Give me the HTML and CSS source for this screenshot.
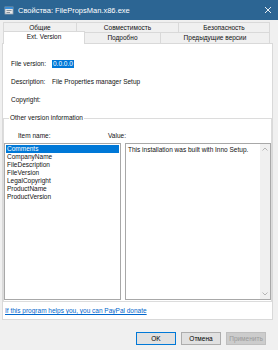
FILE: index.html
```html
<!DOCTYPE html>
<html lang="ru">
<head>
<meta charset="utf-8">
<title>Свойства: FilePropsMan.x86.exe</title>
<link rel="stylesheet" href="styles.css">
</head>
<body>

<div class="window">
    <div class="titlebar">
        <svg class="app_icon" width="10" height="10" viewBox="0 0 10 10">
            <rect x="1" y="2" width="8" height="7" fill="#e8e8e8" stroke="#9aa7b3" stroke-width="0.8"/>
            <rect x="1" y="2" width="8" height="2" fill="#3c8fd8"/>
            <rect x="2.5" y="5.2" width="5" height="0.8" fill="#6d7b88"/>
            <rect x="2.5" y="7" width="3.5" height="0.8" fill="#6d7b88"/>
        </svg>
        <span class="title">Свойства: FilePropsMan.x86.exe</span>
        <svg class="close" width="8" height="8" viewBox="0 0 8 8">
            <path d="M1 1 L7 7 M7 1 L1 7" stroke="#fff" stroke-width="0.9"/>
        </svg>
    </div>

    <div class="tabs">
        <div class="tab_row">
            <div class="tab" style="width: 74px;">Общие</div>
            <div class="tab" style="width: 103px;">Совместимость</div>
            <div class="tab" style="width: 92px;">Безопасность</div>
        </div>
        <div class="tab_row">
            <div class="tab active" style="width: 82px;">Ext. Version</div>
            <div class="tab" style="width: 77px;">Подробно</div>
            <div class="tab" style="width: 110px;">Предыдущие версии</div>
        </div>
    </div>

    <div class="page">
        <div class="fields">
            <span class="label">File version:</span>
            <span class="val"><span class="selected_text">0.0.0.0</span></span>
            <span class="label">Description:</span>
            <span class="val">File Properties manager Setup</span>
            <span class="label">Copyright:</span>
            <span class="val"></span>
        </div>

        <fieldset class="group">
            <legend>Other version information</legend>
            <div class="col_heads">
                <span class="head_item">Item name:</span>
                <span class="head_value">Value:</span>
            </div>
            <div class="cols">
                <ul class="items">
                    <li class="current">Comments</li>
                    <li>CompanyName</li>
                    <li>FileDescription</li>
                    <li>FileVersion</li>
                    <li>LegalCopyright</li>
                    <li>ProductName</li>
                    <li>ProductVersion</li>
                </ul>
                <div class="value_box">
                    <div class="value_text">This installation was built with Inno Setup.</div>
                    <div class="scrollbar">
                        <svg width="6" height="4" viewBox="0 0 6 4"><path d="M0.5 3.5 L3 1 L5.5 3.5" fill="none" stroke="#a6a6a6" stroke-width="0.8"/></svg>
                        <svg width="6" height="4" viewBox="0 0 6 4"><path d="M0.5 0.5 L3 3 L5.5 0.5" fill="none" stroke="#a6a6a6" stroke-width="0.8"/></svg>
                    </div>
                </div>
            </div>
        </fieldset>

        <a class="donate" href="#">If this program helps you, you can PayPal donate</a>
    </div>

    <div class="buttons">
        <button class="btn default">OK</button>
        <button class="btn">Отмена</button>
        <button class="btn" disabled>Применить</button>
    </div>
</div>

</body>
</html>
```

FILE: styles.css
```css
*,*:after,*:before{
	box-sizing: border-box;
}
body{
	margin: 0;
	font-family: "Liberation Sans", Arial, sans-serif;
	font-size: 6.5px;
	color: #111;
	background: #f0f0f0;
}

.window{
	width: 278px;
	height: 350px;
	display: flex;
	flex-direction: column;
	background: #f0f0f0;
}

.titlebar{
	height: 20px;
	background: #2c6593;
	color: #fff;
	display: flex;
	align-items: center;
	padding: 0 6px 0 4px;
}
.app_icon{
	margin-right: 4px;
}
.title{
	font-size: 7.5px;
	flex: 1;
}

.tabs{
	margin: 2px 0 0 3px;
	display: flex;
	flex-direction: column;
}
.tab_row{
	display: flex;
	height: 10px;
}
.tab_row + .tab_row{
	height: 11px;
}
.tab{
	border: 1px solid #d9d9d9;
	border-bottom: 0;
	margin-right: -1px;
	background: #f0f0f0;
	text-align: center;
	line-height: 9px;
}
.tab_row + .tab_row .tab{
	line-height: 10px;
}
.tab.active{
	background: #fff;
	position: relative;
	z-index: 1;
	margin-top: -1px;
	height: 13px;
	line-height: 11px;
}

.page{
	margin-left: 2px;
	width: 271px;
	height: 277px;
	background: #fff;
	border: 1px solid #d9d9d9;
	padding: 15px 0 0 0;
	display: flex;
	flex-direction: column;
}

.fields{
	display: grid;
	grid-template-columns: 41px 1fr;
	grid-auto-rows: 10px;
	row-gap: 8px;
	padding-left: 8px;
	line-height: 10px;
}
.selected_text{
	display: inline-block;
	background: #0078d7;
	color: #fff;
	line-height: 8px;
	padding: 0 1px;
}

.group{
	margin: 9px 0 0 0;
	padding: 0 0 1px 0;
	border: 1px solid #dcdcdc;
	min-width: 0;
}
.group legend{
	line-height: 8px;
	padding: 0 1px;
	margin-left: 5px;
}
.col_heads{
	display: flex;
	line-height: 8px;
	padding-top: 10px;
}
.head_item{
	margin-left: 14px;
	width: 90px;
}
.cols{
	display: flex;
	gap: 4px;
	margin-top: 3px;
	height: 157px;
}
.items{
	list-style: none;
	margin: 0;
	padding: 1px 1px 0;
	width: 117px;
	border: 1px solid #a8a8a8;
	line-height: 8px;
}
.items li{
	padding-left: 1px;
}
.items li.current{
	background: #0078d7;
	color: #fff;
}
.value_box{
	flex: 1;
	border: 1px solid #a8a8a8;
	display: flex;
}
.value_text{
	flex: 1;
	padding: 2px 2px;
	line-height: 8px;
}
.scrollbar{
	width: 10px;
	background: #f0f0f0;
	display: flex;
	flex-direction: column;
	justify-content: space-between;
	align-items: center;
	padding: 3px 0;
}
.scrollbar svg{
	display: block;
}

.donate{
	margin: 5px 0 0 2px;
	color: #0066cc;
	line-height: 8px;
}

.buttons{
	display: flex;
	justify-content: flex-end;
	gap: 5px;
	padding-right: 12px;
	margin-top: 12px;
}
.btn{
	width: 40px;
	height: 13px;
	padding: 0;
	font-family: "Liberation Sans", Arial, sans-serif;
	font-size: 6.5px;
	background: #e1e1e1;
	border: 1px solid #adadad;
	color: #000;
}
.btn.default{
	border-color: #0078d7;
}
.btn:disabled{
	background: #cccccc;
	border-color: #bfbfbf;
	color: #9a9a9a;
}
```
